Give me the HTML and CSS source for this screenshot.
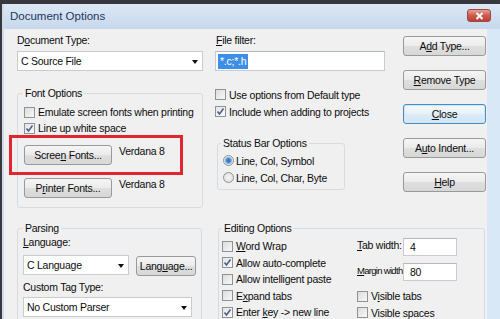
FILE: index.html
```html
<!DOCTYPE html>
<html lang="en">
<head>
    <meta charset="UTF-8">
    <title>Document Options</title>
    <link rel="stylesheet" href="styles.css">
</head>
<body>
<div class="window">
    <div class="titlebar">
        <span class="title">Document Options</span>
        <div class="close-btn">
            <svg width="9" height="8" viewBox="0 0 9 8"><path d="M1.5 1 L7.5 7 M7.5 1 L1.5 7" stroke="#fff" stroke-width="2"/></svg>
        </div>
    </div>

    <div class="client">
        <div class="top">
            <!-- columna izquierda -->
            <div class="col-left">
                <span class="label">D<u>o</u>cument Type:</span>
                <div class="select doc-type"><span>C Source File</span><span class="arrow"></span></div>

                <div class="group font-group">
                    <span class="group-title">Font Options</span>
                    <div class="check first"><span class="box"></span><span>Emulate screen fonts when printing</span></div>
                    <div class="check"><span class="box checked"><svg width="9" height="9" viewBox="0 0 9 9"><path d="M1.5 4.5 L3.5 7 L7.5 1.5" fill="none" stroke="#4b5f8c" stroke-width="1.6"/></svg></span><span>Line up white space</span></div>
                    <div class="font-row screen-row">
                        <div class="btn font-btn"><span>Scree<u>n</u> Fonts...</span></div>
                        <span class="font-name">Verdana 8</span>
                        <div class="highlight"></div>
                    </div>
                    <div class="font-row printer-row">
                        <div class="btn font-btn"><span>P<u>r</u>inter Fonts...</span></div>
                        <span class="font-name">Verdana 8</span>
                    </div>
                </div>
            </div>

            <!-- columna central -->
            <div class="col-mid">
                <span class="label filter-label"><u>F</u>ile filter:</span>
                <div class="input filter-input"><span class="selected-text">*.c;*.h</span></div>

                <div class="mid-checks">
                    <div class="check tall"><span class="box"></span><span>Use options from Default type</span></div>
                    <div class="check tall"><span class="box checked"><svg width="9" height="9" viewBox="0 0 9 9"><path d="M1.5 4.5 L3.5 7 L7.5 1.5" fill="none" stroke="#4b5f8c" stroke-width="1.6"/></svg></span><span>Include when adding to projects</span></div>
                </div>

                <div class="group status-group">
                    <span class="group-title">Status Bar Options</span>
                    <div class="radio-row first"><span class="radio on"></span><span>Line, Col, Symbol</span></div>
                    <div class="radio-row"><span class="radio"></span><span>Line, Col, Char, Byte</span></div>
                </div>
            </div>

            <!-- botones -->
            <div class="col-btns">
                <div class="btn"><span>A<u>d</u>d Type...</span></div>
                <div class="btn"><span><u>R</u>emove Type</span></div>
                <div class="btn btn-default"><span><u>C</u>lose</span></div>
                <div class="btn"><span>A<u>u</u>to Indent...</span></div>
                <div class="btn"><span><u>H</u>elp</span></div>
            </div>
        </div>

        <div class="bottom">
            <div class="group parsing-group">
                <span class="group-title">Parsing</span>
                <span class="label lang-label"><u>L</u>anguage:</span>
                <div class="lang-row">
                    <div class="select lang-select"><span>C Language</span><span class="arrow"></span></div>
                    <div class="btn lang-btn"><span>Lang<u>u</u>age...</span></div>
                </div>
                <span class="label tag-label">Custom Tag Type:</span>
                <div class="select tag-select"><span>No Custom Parser</span><span class="arrow"></span></div>
            </div>

            <div class="group editing-group">
                <span class="group-title">Editing Options</span>
                <div class="edit-body">
                    <div class="edit-checks">
                        <div class="check row"><span class="box"></span><span><u>W</u>ord Wrap</span></div>
                        <div class="check row"><span class="box checked"><svg width="9" height="9" viewBox="0 0 9 9"><path d="M1.5 4.5 L3.5 7 L7.5 1.5" fill="none" stroke="#4b5f8c" stroke-width="1.6"/></svg></span><span>Allow auto-complete</span></div>
                        <div class="check row"><span class="box"></span><span>Allow intelligent paste</span></div>
                        <div class="check row"><span class="box"></span><span>E<u>x</u>pand tabs</span></div>
                        <div class="check row"><span class="box checked"><svg width="9" height="9" viewBox="0 0 9 9"><path d="M1.5 4.5 L3.5 7 L7.5 1.5" fill="none" stroke="#4b5f8c" stroke-width="1.6"/></svg></span><span>Enter <u>k</u>ey -&gt; new line</span></div>
                    </div>
                    <div class="edit-fields">
                        <div class="field"><span class="field-label"><u>T</u>ab width:</span><div class="input small-input">4</div></div>
                        <div class="field second"><span class="field-label tight"><u>M</u>argin width:</span><div class="input small-input">80</div></div>
                        <div class="field-checks">
                            <div class="check row"><span class="box"></span><span>V<u>i</u>sible tabs</span></div>
                            <div class="check row"><span class="box"></span><span>Visible spaces</span></div>
                        </div>
                    </div>
                </div>
            </div>
        </div>
    </div>
</div>
</body>
</html>
```

FILE: styles.css
```css
* {
    box-sizing: border-box;
}
body {
    margin: 0;
    width: 500px;
    height: 319px;
    overflow: hidden;
    background-color: #36383b;
    font-family: "Liberation Sans", Arial, sans-serif;
    font-size: 10.5px;
    letter-spacing: -0.25px;
    color: #0c0c0c;
}
u {
    text-decoration-thickness: 1px;
    text-underline-offset: 1px;
}

/* marco de la ventana */
.window {
    margin: 4px 0 0 2px;
    height: 315px;
    border-left: 2px solid #cfdbe7;
    background-color: #d9e8f6;
}
.titlebar {
    height: 25px;
    display: flex;
    justify-content: space-between;
    align-items: flex-start;
    padding: 0 9px 0 6px;
    background: linear-gradient(#dce8f5, #c6d8ec);
}
.title {
    font-size: 11.5px;
    letter-spacing: 0;
    line-height: 25px;
    color: #1e3560;
}
.close-btn {
    margin-top: 5px;
    width: 24px;
    height: 13px;
    border: 1px solid #9a4a44;
    border-radius: 3px;
    background: linear-gradient(#e8a096, #cf5a4e 50%, #bf3e33);
    display: flex;
    align-items: center;
    justify-content: center;
}
.client {
    margin-right: 13px;
    height: 290px;
    padding: 5px 1px 0 13px;
    background-color: #f0f0f0;
}

/* sección superior */
.top {
    display: flex;
    align-items: flex-start;
}
.col-left {
    width: 186px;
}
.col-mid {
    width: 170px;
    margin-left: 12px;
}
.col-btns {
    width: 83px;
    margin-left: 18px;
    padding-top: 2px;
    display: flex;
    flex-direction: column;
    gap: 14px;
}
.label {
    display: block;
    line-height: 13px;
}
.filter-label {
    margin-left: 1px;
}

.select {
    margin-top: 4px;
    height: 20px;
    background-color: #fff;
    border: 1px solid #c9cbcf;
    display: flex;
    align-items: center;
    justify-content: space-between;
    padding: 0 4px 0 3px;
}
.arrow {
    width: 0;
    height: 0;
    border-top: 4px solid #111;
    border-left: 3.5px solid transparent;
    border-right: 3.5px solid transparent;
    margin-top: 1px;
}
.input {
    height: 20px;
    background-color: #fff;
    border: 1px solid #c9cbcf;
    border-top-color: #b5b8bd;
    display: flex;
    align-items: center;
}
.filter-input {
    margin-top: 4px;
    padding-left: 2px;
}
.selected-text {
    background-color: #3d8ee6;
    color: #fff;
    padding: 1px 2px;
    line-height: 13px;
}

/* grupos */
.group {
    border: 1px solid #d5dde3;
    border-radius: 3px;
}
.group-title {
    display: block;
    width: max-content;
    margin-top: -7px;
    padding: 0 2px;
    line-height: 13px;
    background-color: #f0f0f0;
}
.font-group {
    margin-top: 22px;
    padding: 0 6px 9px 6px;
}
.font-group .group-title {
    margin-left: -1px;
}

.check {
    display: flex;
    align-items: center;
    height: 16px;
    white-space: nowrap;
}
.check.first {
    margin-top: 4px;
}
.check.tall {
    height: 17px;
}
.check.row {
    height: 16.5px;
}
.box {
    width: 11px;
    height: 11px;
    margin-right: 3px;
    border: 1px solid #8f9396;
    background: linear-gradient(135deg, #dcdcdc, #f8f8f8);
    display: flex;
    align-items: center;
    justify-content: center;
    flex-shrink: 0;
}
.box.checked {
    background: linear-gradient(135deg, #e4e4e4, #fbfbfb);
}

.font-row {
    display: flex;
    align-items: flex-start;
    position: relative;
}
.screen-row {
    margin-top: 9px;
}
.printer-row {
    margin-top: 13px;
}
.font-btn {
    width: 88px;
}
.font-name {
    margin-left: 7px;
    line-height: 13px;
}
/* recuadro rojo de anotación */
.highlight {
    position: absolute;
    left: -15px;
    top: -10px;
    width: 174px;
    height: 40px;
    border: 3px solid #e0262e;
}

.mid-checks {
    margin-top: 15px;
}
.status-group {
    margin: 23px 0 0 2px;
    width: 128px;
    padding: 0 5px 3px 5px;
}
.status-group .group-title {
    margin-left: -2px;
}
.radio-row {
    display: flex;
    align-items: center;
    height: 17px;
    white-space: nowrap;
}
.radio-row.first {
    margin-top: 2px;
}
.radio {
    width: 11px;
    height: 11px;
    margin-right: 2px;
    flex-shrink: 0;
    border-radius: 50%;
    border: 1px solid #8f9396;
    background: radial-gradient(circle at 50% 50%, #f6f6f6, #dadada);
}
.radio.on {
    background: radial-gradient(circle, #2f6fb3 0, #4c8ccd 2px, #a9c8e6 3.5px, #f4f4f4 4.5px);
}

/* botones */
.btn {
    height: 20px;
    border: 1px solid #9a9a9a;
    border-radius: 3px;
    background: linear-gradient(#f5f5f5, #ebebeb 50%, #dfdfdf 51%, #d7d7d7);
    display: flex;
    align-items: center;
    justify-content: center;
    white-space: nowrap;
}
.btn-default {
    border-color: #4a8cc2;
    background: linear-gradient(#f3f9fd, #e6f1f9 50%, #dcebf6 51%, #d3e6f4);
    box-shadow: inset 0 0 0 1px #cfe6f7;
}

/* sección inferior */
.bottom {
    display: flex;
    align-items: flex-start;
    margin-top: 20px;
}
.parsing-group {
    width: 185px;
    height: 100px;
    padding: 0 5px;
}
.lang-label {
    margin-top: 1px;
}
.lang-row {
    display: flex;
    align-items: flex-start;
    gap: 7px;
    margin-top: 6px;
}
.lang-row .select {
    margin-top: 0;
}
.lang-select {
    width: 107px;
}
.lang-btn {
    width: 60px;
    margin-top: 1px;
}
.tag-label {
    margin-top: 5px;
}
.tag-select {
    width: 169px;
    margin-top: 3px;
}

.editing-group {
    margin-left: 16px;
    width: 267px;
    height: 100px;
    padding: 0 3px;
}
.edit-body {
    display: flex;
    margin-top: 3px;
}
.edit-checks {
    width: 135px;
}
.field {
    display: flex;
    align-items: flex-start;
    height: 18px;
}
.field.second {
    margin-top: 7px;
}
.field-label {
    width: 46px;
    margin-top: 1px;
    line-height: 13px;
    white-space: nowrap;
}
.field-label.tight {
    font-size: 9.5px;
    letter-spacing: -0.7px;
}
.small-input {
    width: 54px;
    height: 18px;
    padding-left: 6px;
}
.field-checks {
    margin-top: 7px;
}
```
